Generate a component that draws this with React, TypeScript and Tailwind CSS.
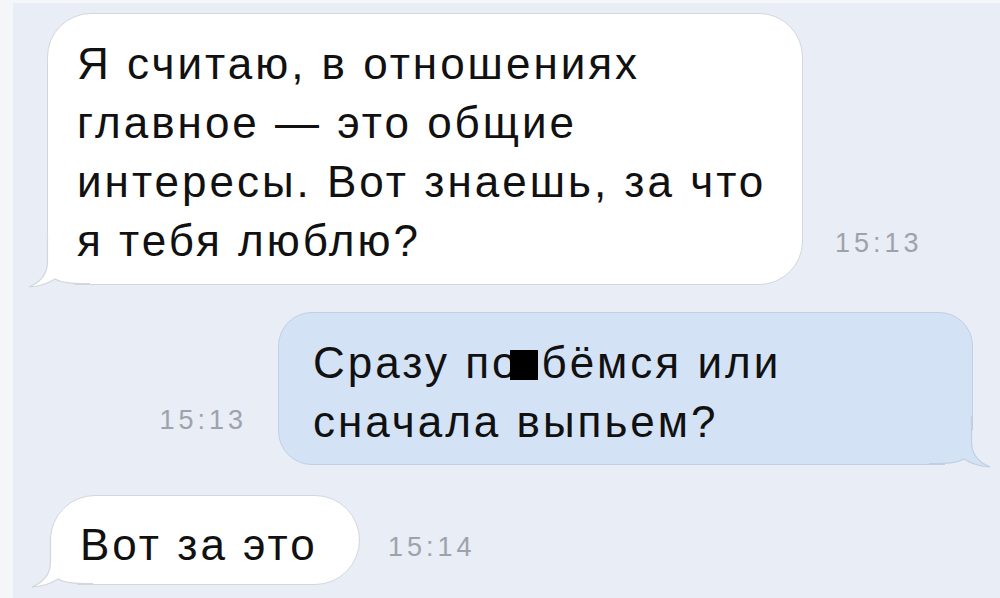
import React from "react";

const BG = "#e8edf6";

function Tail({ fill, stroke, right }: { fill: string; stroke: string; right?: boolean }) {
  return (
    <svg
      width="62"
      height="52"
      viewBox="0 0 62 52"
      className={
        right
          ? "absolute right-[-19px] bottom-[-4px] -scale-x-100 pointer-events-none"
          : "absolute left-[-20px] bottom-[-4px] pointer-events-none"
      }
    >
      <rect x="0" y="14" width="46" height="38" fill={BG} />
      <path
        d="M19.5 0 L19.5 26 C19.5 38 13 46 1 51 C11 50.5 20 47.5 27 43 C33 46.5 41 47.5 62 47.5 L62 0 Z"
        fill={fill}
      />
      <path
        d="M19.5 0 L19.5 26 C19.5 38 13 46 1 51 C11 50.5 20 47.5 27 43 C33 46.5 41 47.5 62 47.5"
        fill="none"
        stroke={stroke}
        strokeWidth="1.2"
      />
    </svg>
  );
}

const font = { fontFamily: '"Liberation Sans", Arial, sans-serif' };

export default function App() {
  return (
    <div
      className="w-[1000px] h-[598px] bg-[#f4f6fa] pl-[13px] pt-[3px] flex overflow-hidden"
      style={font}
    >
      <div className="flex-1 bg-[#e8edf6] flex flex-col pt-[10px]">
        {/* Row 1 */}
        <div className="flex items-end">
          <div className="relative ml-[34px] w-[756px] h-[272px] bg-white border border-[#d3d6db] rounded-[44px] rounded-bl-none pl-[29px] pt-[20px]">
            <Tail fill="#ffffff" stroke="#d3d6db" />
            <p className="relative z-10 text-[44px] leading-[59px] tracking-[3px] text-[#111111] whitespace-nowrap">
              Я считаю, в отношениях
              <br />
              главное — это общие
              <br />
              интересы. Вот знаешь, за что
              <br />я тебя люблю?
            </p>
          </div>
          <span className="ml-[32px] mb-[27px] text-[27px] leading-[30px] tracking-[4px] text-[#9ea3ab]">
            15:13
          </span>
        </div>

        {/* Row 2 */}
        <div className="flex items-end justify-end pr-[27px] mt-[27px]">
          <span className="mr-[31px] mb-[30px] text-[27px] leading-[30px] tracking-[4px] text-[#9ea3ab]">
            15:13
          </span>
          <div className="relative w-[695px] h-[153px] bg-[#d4e2f6] border border-[#c2cfe2] rounded-[34px] rounded-br-none pl-[34px] pt-[20px]">
            <Tail fill="#d4e2f6" stroke="#c2cfe2" right />
            <p className="relative z-10 text-[44px] leading-[59px] tracking-[3px] text-[#111111] whitespace-nowrap">
              Сразу по
              <span className="inline-block w-[28px] h-[30px] bg-black align-[-2px] ml-[-9px] mr-[3px]" />
              бёмся или
              <br />
              сначала выпьем?
            </p>
          </div>
        </div>

        {/* Row 3 */}
        <div className="flex items-end mt-[30px]">
          <div className="relative ml-[37px] w-[310px] h-[90px] bg-white border border-[#d3d6db] rounded-[45px] rounded-bl-none pl-[29px] pt-[19px]">
            <Tail fill="#ffffff" stroke="#d3d6db" />
            <p className="relative z-10 text-[44px] leading-[59px] tracking-[3px] text-[#111111] whitespace-nowrap">
              Вот за это
            </p>
          </div>
          <span className="ml-[28px] mb-[23px] text-[27px] leading-[30px] tracking-[4px] text-[#9ea3ab]">
            15:14
          </span>
        </div>
      </div>
    </div>
  );
}
